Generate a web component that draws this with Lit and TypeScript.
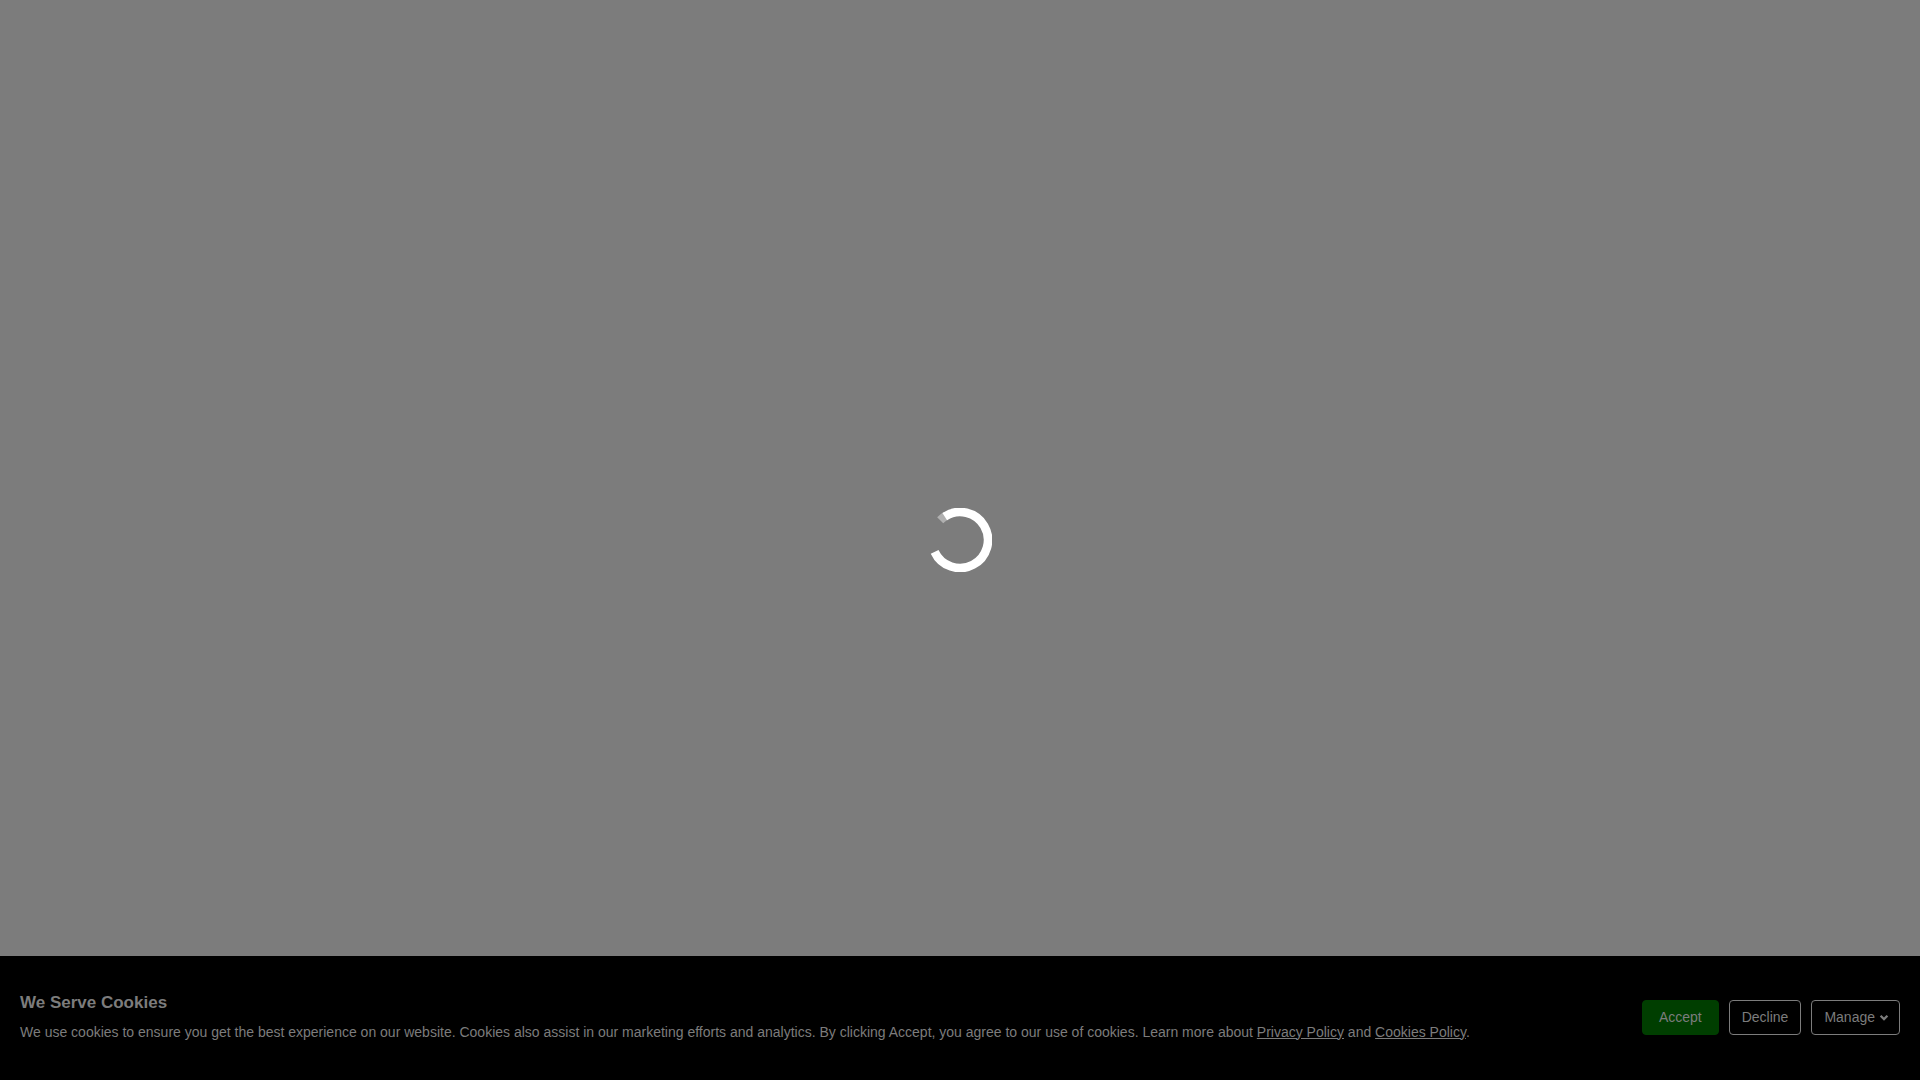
import { LitElement, html, css } from "lit";
import { customElement } from "lit/decorators.js";

@customElement("loading-spinner")
export class LoadingSpinner extends LitElement {
  static styles = css`
    :host {
      display: block;
    }
    .ring {
      display: block;
      width: 64px;
      height: 64px;
    }
  `;

  // Point on the ring's centre line, angle in degrees clockwise from the right.
  private point(angle: number): string {
    const rad = (angle * Math.PI) / 180;
    return `${(32 + 28 * Math.cos(rad)).toFixed(2)} ${(32 + 28 * Math.sin(rad)).toFixed(2)}`;
  }

  private arc(from: number, to: number): string {
    const large = to - from > 180 ? 1 : 0;
    return `M${this.point(from)} A28 28 0 ${large} 1 ${this.point(to)}`;
  }

  render() {
    return html`
      <svg class="ring" viewBox="0 0 64 64" fill="none" stroke-width="8.6" role="img" aria-label="Loading">
        <path d=${this.arc(225, 240)} stroke="#b0b0b0" />
        <path d=${this.arc(237, 515)} stroke="#ffffff" />
      </svg>
    `;
  }
}

@customElement("cookie-bar")
export class CookieBar extends LitElement {
  static styles = css`
    :host {
      display: block;
    }
    .bar {
      display: flex;
      align-items: center;
      justify-content: space-between;
      gap: 20px;
      min-height: 124px;
      padding: 20px 20px 22px;
      box-sizing: border-box;
      background: #000000;
      color: #7c7c7c;
      font-size: 14px;
      line-height: 21px;
    }
    .title {
      margin: 0 0 8px;
      font-size: 17px;
      line-height: 22px;
      font-weight: 700;
    }
    .text {
      margin: 0;
    }
    .link {
      color: inherit;
      text-decoration: underline;
    }
    .actions {
      display: flex;
      flex-shrink: 0;
      gap: 10px;
    }
    .button {
      display: flex;
      align-items: center;
      gap: 5px;
      padding: 6px 12px;
      border: 1px solid #7c7c7c;
      border-radius: 4px;
      background: #000000;
      color: inherit;
      font: inherit;
      cursor: pointer;
    }
    .accept {
      padding: 6px 16px;
      border-color: #003e00;
      background: #003e00;
    }
    .manage {
      padding: 6px 11px 6px 12px;
    }
    .chevron {
      width: 8px;
      height: 6px;
      margin-top: 2px;
      overflow: visible;
    }
  `;

  render() {
    return html`
      <section class="bar" aria-labelledby="cookie-title">
        <div>
          <h2 class="title" id="cookie-title">We Serve Cookies</h2>
          <p class="text">
            We use cookies to ensure you get the best experience on our website. Cookies also assist in our marketing
            efforts and analytics. By clicking Accept, you agree to our use of cookies. Learn more about
            <a class="link" href="#privacy">Privacy Policy</a> and <a class="link" href="#cookies">Cookies Policy</a>.
          </p>
        </div>
        <div class="actions">
          <button class="button accept" type="button">Accept</button>
          <button class="button" type="button">Decline</button>
          <button class="button manage" type="button" aria-expanded="false">
            Manage
            <svg class="chevron" viewBox="0 0 8 6" fill="currentColor" aria-hidden="true">
              <path d="M-0.2 1.6 L1.4 0 L4 2.5 L6.6 0 L8.2 1.6 L4 5.8 Z" />
            </svg>
          </button>
        </div>
      </section>
    `;
  }
}

@customElement("app-root")
export class AppRoot extends LitElement {
  static styles = css`
    :host {
      display: block;
      font-family: "Liberation Sans", Arial, sans-serif;
    }
    .page {
      position: relative;
      display: flex;
      flex-direction: column;
      justify-content: flex-end;
      min-height: 100vh;
      background: #7c7c7c;
    }
    .overlay {
      position: absolute;
      inset: 0;
      display: flex;
      align-items: center;
      justify-content: center;
      pointer-events: none;
    }
  `;

  render() {
    return html`
      <main class="page">
        <cookie-bar></cookie-bar>
        <div class="overlay"><loading-spinner></loading-spinner></div>
      </main>
    `;
  }
}
